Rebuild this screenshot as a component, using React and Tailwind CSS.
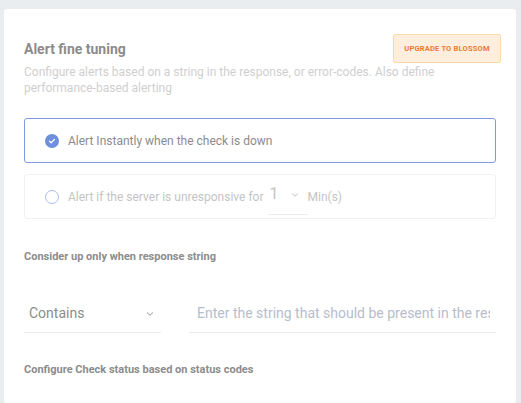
import React from "react";

export default function App() {
  return (
    <div className="min-h-[403px] w-[521px] bg-[#e9edf0] pt-[9px] pl-[4px] pr-[5px] overflow-hidden" style={{ fontFamily: "Roboto, 'Liberation Sans', sans-serif" }}>
      <div className="bg-white rounded-[3px] h-[394px] px-[20px] pt-[25px]">
        <div className="flex justify-between items-center">
          <h2 className="text-[14px] font-bold text-[#8c8c8c] leading-[20px]">Alert fine tuning</h2>
          <div className="shrink-0 whitespace-nowrap mr-[-5px] w-[108px] h-[29px] flex items-center justify-center bg-[#feeedd] border border-[#fdd9ab] rounded-[2px] text-[7.5px] font-bold text-[#ec7a32] tracking-[0.2px]">
            UPGRADE TO BLOSSOM
          </div>
        </div>
        <p className="text-[12px] text-[#cfcfcf] leading-[16px] mt-[1px] max-w-[420px]">
          Configure alerts based on a string in the response, or error-codes. Also define performance-based alerting
        </p>

        <div className="mt-[22px] h-[45px] border border-[#7f9ce0] rounded-[3px] flex items-center pl-[20px]">
          <div className="w-[14px] h-[14px] rounded-full bg-[#6e8fdd] flex items-center justify-center">
            <svg width="8" height="8" viewBox="0 0 8 8"><path d="M1.5 4.2 L3.2 5.8 L6.5 2.4" fill="none" stroke="white" strokeWidth="1.3" strokeLinecap="round" strokeLinejoin="round" /></svg>
          </div>
          <span className="ml-[9px] text-[12px] text-[#8c8c8c]">Alert Instantly when the check is down</span>
        </div>

        <div className="mt-[11px] h-[45px] border border-[#f1f1f1] rounded-[3px] flex items-center pl-[20px]">
          <div className="w-[14px] h-[14px] rounded-full border border-[#a9bdf0]" />
          <span className="ml-[9px] text-[12px] text-[#c4c4c4]">Alert if the server is unresponsive for</span>
          <div className="relative ml-[4px] w-[40px] h-[30px] flex items-center border-b border-[#ececec] mt-[6px]">
            <span className="text-[16px] text-[#c4c4c4] ml-[2px] -mt-[10px]">1</span>
            <svg className="ml-[12px] -mt-[8px]" width="8" height="6" viewBox="0 0 8 6"><path d="M1 1.5 L4 4.2 L7 1.5" fill="none" stroke="#c4c4c4" strokeWidth="1" /></svg>
          </div>
          <span className="text-[12px] text-[#c4c4c4]">Min(s)</span>
        </div>

        <h3 className="mt-[31px] text-[11px] font-bold text-[#8c8c8c] leading-[14px]">Consider up only when response string</h3>

        <div className="mt-[31px] flex items-end">
          <div className="shrink-0 w-[137px] h-[38px] border-b border-[#ececec] flex items-center justify-between pl-[5px] pr-[7px]">
            <span className="text-[14px] text-[#8c8c8c]">Contains</span>
            <svg width="8" height="6" viewBox="0 0 8 6"><path d="M1 1.5 L4 4.2 L7 1.5" fill="none" stroke="#999" strokeWidth="1" /></svg>
          </div>
          <div className="ml-[28px] flex-1 min-w-0 h-[38px] border-b border-[#ececec] flex items-center pl-[8px] pr-[6px]">
            <div className="w-full overflow-hidden whitespace-nowrap text-[14px] text-[#b6bdcc]">Enter the string that should be present in the response</div>
          </div>
        </div>

        <h3 className="mt-[30px] text-[11px] font-bold text-[#8c8c8c] leading-[14px]">Configure Check status based on status codes</h3>
      </div>
    </div>
  );
}
